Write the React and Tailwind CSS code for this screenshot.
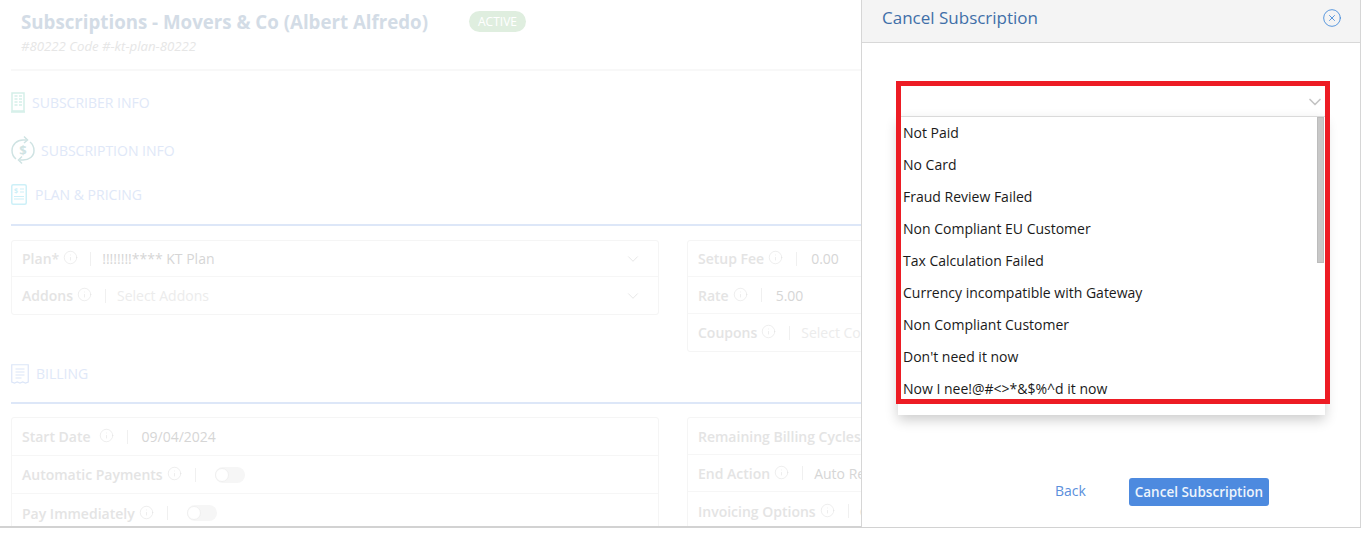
import React from 'react';
import { ChevronDown, CircleX, Info } from 'lucide-react';

const reasons = [
  'Not Paid',
  'No Card',
  'Fraud Review Failed',
  'Non Compliant EU Customer',
  'Tax Calculation Failed',
  'Currency incompatible with Gateway',
  'Non Compliant Customer',
  "Don't need it now",
  'Now I nee!@#<>*&$%^d it now',
];

const BuildingIcon = () => (
  <svg width="14" height="21" viewBox="0 0 14 21" fill="none" className="shrink-0">
    <rect x="1" y="1" width="12" height="18" stroke="#d5efe9" strokeWidth="1.5" />
    <path d="M3.5 4h3M8 4h3M3.5 7h3M8 7h3M3.5 10h3M8 10h3M3.5 13h3M8 13h3" stroke="#d5efe9" strokeWidth="1.6" />
    <path d="M0 20h14" stroke="#d5efe9" strokeWidth="1.5" />
  </svg>
);

const CycleIcon = () => (
  <svg width="24" height="30" viewBox="0 0 24 30" fill="none" className="shrink-0">
    <path d="M5 24C2.5 22 1 19 1 15.5C1 9.5 6 5 12 5H15" stroke="#cfe3e3" strokeWidth="1.5" />
    <path d="M13 1.5L16.5 5L13 8" stroke="#cfe3e3" strokeWidth="1.5" />
    <path d="M19 7C21.5 9 23 12 23 15.5C23 21.5 18 25 12 25H9" stroke="#cfe3e3" strokeWidth="1.5" />
    <path d="M11 21.5L7.5 25L11 28.5" stroke="#cfe3e3" strokeWidth="1.5" />
    <text x="12" y="20" textAnchor="middle" fontSize="13" fontWeight="700" fill="#cfe3e3" fontFamily="Open Sans">$</text>
  </svg>
);

const PlanIcon = () => (
  <svg width="16" height="21" viewBox="0 0 16 21" fill="none" className="shrink-0">
    <rect x="0.75" y="0.75" width="14.5" height="19.5" rx="1.5" stroke="#cdf0f8" strokeWidth="1.5" />
    <text x="5" y="9" textAnchor="middle" fontSize="7" fontWeight="700" fill="#cdf0f8" fontFamily="Open Sans">$</text>
    <path d="M9 5h4M9 8h4M3 12.5h10M3 15h10" stroke="#cdf0f8" strokeWidth="1.2" />
  </svg>
);

const ReceiptIcon = () => (
  <svg width="18" height="20" viewBox="0 0 18 20" fill="none" className="shrink-0">
    <path d="M0.75 18V0.75H17.25V18L14.5 19L11.7 18L9 19L6.2 18L3.5 19Z" stroke="#dce6f8" strokeWidth="1.2" />
    <path d="M4.5 5h9M4.5 8h9M4.5 11h9M4.5 14h6" stroke="#dce6f8" strokeWidth="1.2" />
  </svg>
);

const SectionHead = ({ icon, label, gap, className }) => (
  <div className={`flex items-center ${gap} ${className}`}>
    {icon}
    <span className="text-[14px] text-[#e0e8f8]">{label}</span>
  </div>
);

const Toggle = () => (
  <span className="ml-[8px] flex h-[16px] w-[30px] items-center rounded-full bg-[#f6f6f6]">
    <span className="h-[14px] w-[14px] rounded-full border border-[#f0f0f0] bg-white" />
  </span>
);

const Field = ({
  label,
  value,
  placeholder,
  toggle,
  select,
  height,
  last,
  iconGap = 'ml-[4px]',
  sepGap = 'ml-[13px]',
  valueGap = 'mr-[11px]',
}) => (
  <div className={`flex items-center pl-[10px] pr-[16px] ${height} ${last ? '' : 'border-b border-[#f6f6f6]'}`}>
    <span className="text-[14px] font-semibold whitespace-nowrap text-[#e4e4e4]">{label}</span>
    <Info size={15} strokeWidth={1} className={`shrink-0 -translate-y-[1px] text-[#e4e4e4] ${iconGap}`} />
    <span className={`h-[14px] w-px shrink-0 bg-[#f0f0f0] ${sepGap} ${valueGap}`} />
    {value && <span className="text-[14px] whitespace-nowrap text-[#d6d6d6]">{value}</span>}
    {placeholder && <span className="text-[14px] whitespace-nowrap text-[#ececec]">{placeholder}</span>}
    {toggle && <Toggle />}
    {select && <ChevronDown size={18} strokeWidth={1.2} className="ml-auto shrink-0 text-[#e4e4e4]" />}
  </div>
);

const Card = ({ children, className }) => (
  <div className={`overflow-hidden rounded-[3px] border border-[#f5f5f5] ${className}`}>{children}</div>
);

const Background = () => (
  <div className="flex h-[528px] w-[1361px] flex-col overflow-hidden border-b-2 border-[#d2d2d2] pl-[11px]">
    <div className="shrink-0 border-b-2 border-[#f8f8f8] pt-[8px] pb-[13px] pl-[10px]">
      <div className="flex items-center">
        <h1 className="text-[18.7px] leading-[27px] font-bold text-[#d3dce6]">Subscriptions - Movers &amp; Co (Albert Alfredo)</h1>
        <span className="ml-[41px] flex h-[21px] items-center rounded-full bg-[#dfeedf] px-[9px] text-[12px] text-white">ACTIVE</span>
      </div>
      <p className="mt-[1px] text-[13.2px] leading-[20px] text-[#e6e6e6] italic">#80222 Code #-kt-plan-80222</p>
    </div>
    <SectionHead icon={<BuildingIcon />} label="SUBSCRIBER INFO" gap="gap-[7px]" className="mt-[21px]" />
    <SectionHead icon={<CycleIcon />} label="SUBSCRIPTION INFO" gap="gap-[6px]" className="mt-[22px]" />
    <SectionHead icon={<PlanIcon />} label="PLAN & PRICING" gap="gap-[8px]" className="mt-[19px]" />
    <div className="mt-[19px] h-[2px] shrink-0 bg-[#dde7f8]" />
    <div className="mt-[14px] flex h-[123px] shrink-0 items-start gap-[28px]">
      <Card className="w-[648px]">
        <Field label="Plan*" value="!!!!!!!!**** KT Plan" select height="h-[36px]" sepGap="ml-[12px]" />
        <Field label="Addons" placeholder="Select Addons" select height="h-[37px]" last />
      </Card>
      <Card className="w-[400px]">
        <Field label="Setup Fee" value="0.00" height="h-[36px]" valueGap="mr-[14px]" />
        <Field label="Rate" value="5.00" height="h-[37px]" valueGap="mr-[14px]" />
        <Field label="Coupons" placeholder="Select Coupons" height="h-[37px]" last />
      </Card>
    </div>
    <SectionHead icon={<ReceiptIcon />} label="BILLING" gap="gap-[7px]" className="mt-0" />
    <div className="mt-[18px] h-[2px] shrink-0 bg-[#dde7f8]" />
    <div className="mt-[13px] flex items-start gap-[28px]">
      <Card className="w-[648px]">
        <Field label="Start Date" value="09/04/2024" height="h-[38px]" iconGap="ml-[8px]" valueGap="mr-[14px]" />
        <Field label="Automatic Payments" toggle height="h-[38px]" />
        <Field label="Pay Immediately" toggle height="h-[38px]" last />
      </Card>
      <Card className="w-[400px]">
        <Field label="Remaining Billing Cycles" value="Unlimited" height="h-[37px]" />
        <Field label="End Action" value="Auto Renew" height="h-[37px]" />
        <Field label="Invoicing Options" value="Consolidated" height="h-[38px]" last />
      </Card>
    </div>
  </div>
);

const CancelPanel = () => (
  <div className="absolute top-0 left-[861px] flex h-[527px] w-[500px] flex-col border-x border-[#d6d6d6] bg-white">
    <div className="flex h-[43px] shrink-0 items-center justify-between border-b border-[#d8d8d8] bg-[#f4f4f4] pr-[18px] pl-[20px]">
      <h2 className="-translate-y-[3px] text-[17px] text-[#3f6fa8]">Cancel Subscription</h2>
      <CircleX size={20} strokeWidth={1} className="-translate-y-[3px] text-[#3b86d8]" />
    </div>
    <div className="mt-[43px] ml-[36px] w-[427px]">
      <div className="flex h-[31px] items-center justify-end border-b border-[#e2e2e2]">
        <ChevronDown size={20} strokeWidth={2} className="mt-[2px] text-[#c4c4c4]" />
      </div>
      <div className="flex h-[298px] bg-white shadow-[0_5px_12px_rgba(0,0,0,0.2)]">
        <ul className="-mt-[1px] flex-1 overflow-hidden pl-[5px]">
          {reasons.map((reason) => (
            <li key={reason} className="flex h-[32px] items-center text-[14px] whitespace-nowrap text-[#1a1a1a]">
              {reason}
            </li>
          ))}
        </ul>
        <div className="mr-[1px] h-[146px] w-[7px] border border-[#bcbcbc] bg-[#c8c8c8]" />
      </div>
    </div>
    <div className="mt-[62px] flex items-center pl-[193px]">
      <button className="-translate-y-[1px] text-[14px] text-[#5b8fdc]">Back</button>
      <button className="mt-[1px] ml-[43px] flex h-[28px] w-[140px] items-center justify-center rounded-[3px] bg-[#4d8adf] text-[13.5px] font-semibold text-[#eef4fc]">
        Cancel Subscription
      </button>
    </div>
  </div>
);

export default function App() {
  return (
    <div className="relative h-[535px] w-[1364px] overflow-hidden bg-white font-['Open_Sans',sans-serif]">
      <Background />
      <CancelPanel />
      {/* red annotation around the dropdown */}
      <div className="pointer-events-none absolute top-[81px] left-[896px] h-[323px] w-[434px] border-[5px] border-[#ed1c24]" />
    </div>
  );
}
